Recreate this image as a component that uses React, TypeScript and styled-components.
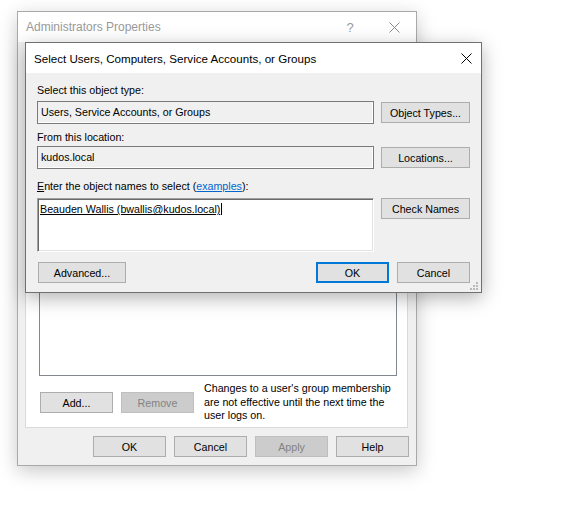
import React from 'react';
import styled, { createGlobalStyle } from 'styled-components';

const GlobalStyle = createGlobalStyle`
  html, body {
    margin: 0;
    padding: 0;
    background: #ffffff;
  }
  body {
    font-family: 'Liberation Sans', Arial, sans-serif;
    font-size: 10.7px;
    color: #000000;
  }
`;

const Desktop = styled.div`
  position: relative;
  width: 574px;
  height: 507px;
  overflow: hidden;
  background: #ffffff;
`;

// windows sit on a free canvas, so they are placed by coordinates
const Window = styled.div<{ $x: number; $y: number; $w: number; $h: number; $active?: boolean }>`
  position: absolute;
  left: ${(p) => p.$x}px;
  top: ${(p) => p.$y}px;
  width: ${(p) => p.$w}px;
  height: ${(p) => p.$h}px;
  box-sizing: border-box;
  display: flex;
  flex-direction: column;
  background: #f0f0f0;
  border: 1px solid ${(p) => (p.$active ? '#707070' : '#a9a9a9')};
  box-shadow: 0 5px 18px rgba(0, 0, 0, ${(p) => (p.$active ? 0.3 : 0.22)});
`;

const TitleBar = styled.div<{ $active?: boolean }>`
  flex: none;
  height: 30px;
  display: flex;
  align-items: center;
  padding-left: 8px;
  background: #ffffff;
  font-size: ${(p) => (p.$active ? '11.6px' : '12px')};
  color: ${(p) => (p.$active ? '#000000' : '#9a9a9a')};
`;

const TitleText = styled.span`
  flex: 1;
  white-space: nowrap;
`;

const TitleButton = styled.div<{ $w: number }>`
  width: ${(p) => p.$w}px;
  height: 30px;
  display: flex;
  align-items: center;
  justify-content: center;
  font-size: 13px;
  color: #9a9a9a;
`;

const CloseIcon = ({ color }: { color: string }) => (
  <svg width='11' height='11' viewBox='0 0 11 11'>
    <path d='M0.5 0.5 L10.5 10.5 M10.5 0.5 L0.5 10.5' stroke={color} strokeWidth='1' fill='none' />
  </svg>
);

const Button = styled.button<{ $w: number; $focused?: boolean }>`
  box-sizing: border-box;
  flex: none;
  width: ${(p) => p.$w}px;
  height: 21px;
  padding: 0;
  margin: 0;
  font-family: 'Liberation Sans', Arial, sans-serif;
  font-size: 10.7px;
  color: #000000;
  background: #e1e1e1;
  border: ${(p) => (p.$focused ? '2px solid #0078d7' : '1px solid #adadad')};
  &:disabled {
    background: #cccccc;
    color: #838383;
    border-color: #bfbfbf;
  }
`;

/* ---------- back dialog ---------- */

const BackBody = styled.div`
  flex: 1;
  display: flex;
  flex-direction: column;
  padding: 6px 8px 8px 7px;
`;

const TabPage = styled.div`
  flex: 1;
  display: flex;
  flex-direction: column;
  background: #ffffff;
  border: 1px solid #d9d9d9;
  padding: 30px 10px 4px 13px;
`;

const ListBox = styled.div`
  flex: 1;
  background: #ffffff;
  border: 1px solid #828790;
`;

const MemberRow = styled.div`
  display: flex;
  align-items: flex-start;
  gap: 8px;
  margin-top: 4px;
  padding-left: 1px;
`;

const ButtonGroup = styled.div`
  display: flex;
  gap: 8px;
  margin-top: 12px;
`;

const Note = styled.p`
  height: 41px;
  margin: 2px 0 0 2px;
  line-height: 13.5px;
  white-space: nowrap;
`;

const DialogButtons = styled.div<{ $between?: boolean }>`
  flex: none;
  display: flex;
  justify-content: ${(p) => (p.$between ? 'space-between' : 'flex-end')};
  gap: 8px;
`;

const BackButtons = styled(DialogButtons)`
  margin-top: 8px;
  margin-right: -1px;
`;

/* ---------- front dialog ---------- */

const FrontBody = styled.div`
  position: relative;
  flex: 1;
  display: flex;
  flex-direction: column;
  padding: 11px 11px 8px 11px;
`;

const Label = styled.div<{ $gap: number }>`
  height: 13px;
  line-height: 13px;
  margin-top: ${(p) => p.$gap}px;
  white-space: nowrap;
`;

const FieldRow = styled.div<{ $top: number; $align?: string }>`
  display: flex;
  align-items: ${(p) => p.$align || 'center'};
  gap: 7px;
  margin-top: ${(p) => p.$top}px;
`;

const ReadField = styled.div`
  box-sizing: border-box;
  flex: 1;
  height: 23px;
  display: flex;
  align-items: center;
  padding: 0 0 1px 3px;
  background: #f0f0f0;
  border: 1px solid #7a7a7a;
  box-shadow: inset -1px -1px 0 #ffffff;
`;

const NamesBox = styled.div`
  box-sizing: border-box;
  flex: 1;
  height: 54px;
  padding: 4px 2px;
  background: #ffffff;
  border: 1px solid;
  border-color: #a0a0a0 #ffffff #ffffff #a0a0a0;
  box-shadow: inset 1px 1px 0 #696969, inset -1px -1px 0 #e3e3e3;
`;

const ResolvedName = styled.span`
  text-decoration: underline;
`;

const Caret = styled.span`
  display: inline-block;
  width: 1px;
  height: 12px;
  margin-left: 1px;
  vertical-align: -2px;
  background: #000000;
`;

const Link = styled.a`
  color: #0066cc;
  text-decoration: underline;
`;

const BottomRow = styled(DialogButtons)`
  margin-top: 10px;
  padding-left: 1px;
`;

const RightButtons = styled.div`
  display: flex;
  gap: 8px;
`;

const Grip = styled.svg`
  position: absolute;
  right: 3px;
  bottom: 2px;
`;

const SizeGrip = () => (
  <Grip width='8' height='8' viewBox='0 0 8 8'>
    {[
      [6, 0],
      [3, 3],
      [6, 3],
      [0, 6],
      [3, 6],
      [6, 6],
    ].map(([x, y]) => (
      <rect key={`${x}-${y}`} x={x} y={y} width='2' height='2' fill='#b9b9b9' />
    ))}
  </Grip>
);

export default function App() {
  return (
    <>
      <GlobalStyle />
      <Desktop>
        <Window $x={17} $y={11} $w={400} $h={455}>
          <TitleBar>
            <TitleText>Administrators Properties</TitleText>
            <TitleButton $w={44}>?</TitleButton>
            <TitleButton $w={44}>
              <CloseIcon color='#8a8a8a' />
            </TitleButton>
          </TitleBar>
          <BackBody>
            <TabPage>
              <ListBox />
              <MemberRow>
                <ButtonGroup>
                  <Button $w={73}>Add...</Button>
                  <Button $w={73} disabled>
                    Remove
                  </Button>
                </ButtonGroup>
                <Note>
                  Changes to a user's group membership
                  <br />
                  are not effective until the next time the
                  <br />
                  user logs on.
                </Note>
              </MemberRow>
            </TabPage>
            <BackButtons>
              <Button $w={73}>OK</Button>
              <Button $w={73}>Cancel</Button>
              <Button $w={73} disabled>
                Apply
              </Button>
              <Button $w={73}>Help</Button>
            </BackButtons>
          </BackBody>
        </Window>

        <Window $x={25} $y={42} $w={457} $h={251} $active>
          <TitleBar $active>
            <TitleText>Select Users, Computers, Service Accounts, or Groups</TitleText>
            <TitleButton $w={30}>
              <CloseIcon color='#000000' />
            </TitleButton>
          </TitleBar>
          <FrontBody>
            <Label $gap={0}>Select this object type:</Label>
            <FieldRow $top={4}>
              <ReadField>Users, Service Accounts, or Groups</ReadField>
              <Button $w={89}>Object Types...</Button>
            </FieldRow>
            <Label $gap={7}>From this location:</Label>
            <FieldRow $top={2}>
              <ReadField>kudos.local</ReadField>
              <Button $w={89}>Locations...</Button>
            </FieldRow>
            <Label $gap={11}>
              <u>E</u>nter the object names to select (<Link>examples</Link>):
            </Label>
            <FieldRow $top={5} $align='flex-start'>
              <NamesBox>
                <ResolvedName>Beauden Wallis (bwallis@kudos.local)</ResolvedName>
                <Caret />
              </NamesBox>
              <Button $w={89}>Check Names</Button>
            </FieldRow>
            <BottomRow $between>
              <Button $w={88}>Advanced...</Button>
              <RightButtons>
                <Button $w={73} $focused>
                  OK
                </Button>
                <Button $w={73}>Cancel</Button>
              </RightButtons>
            </BottomRow>
            <SizeGrip />
          </FrontBody>
        </Window>
      </Desktop>
    </>
  );
}
